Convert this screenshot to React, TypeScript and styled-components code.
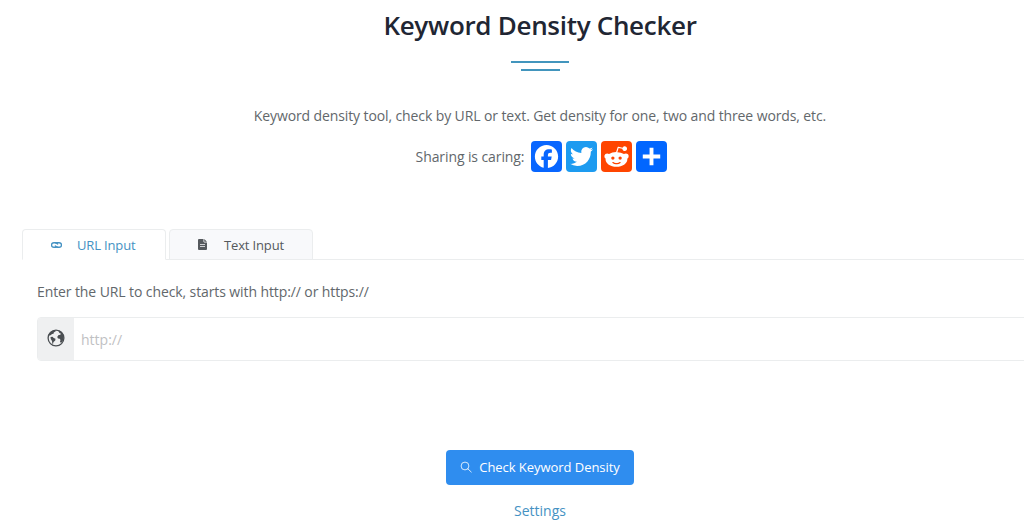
import React from 'react';
import styled, { createGlobalStyle } from 'styled-components';

const colors = {
    heading: '#212633',
    text: '#62676b',
    link: '#4592c3',
    border: '#ebedee',
    primary: '#2f8def',
};

const SHARE_LINKS = [
    {
        name: 'Facebook',
        color: '#0866ff',
        path:
            'M28 16c0-6.627-5.373-12-12-12S4 9.373 4 16c0 5.628 3.875 10.35 9.101 11.647v-7.98h-2.474V16H13.1v-1.58c0-4.085 1.849-5.978 5.859-5.978.76 0 2.072.15 2.608.298v3.325c-.283-.03-.775-.045-1.386-.045-1.967 0-2.728.745-2.728 2.683V16h3.92l-.673 3.667h-3.247v8.245C23.395 27.195 28 22.135 28 16',
    },
    {
        name: 'Twitter',
        color: '#1d9bf0',
        path:
            'M28 8.557a10 10 0 0 1-2.828.775 4.93 4.93 0 0 0 2.166-2.725 9.7 9.7 0 0 1-3.13 1.194 4.92 4.92 0 0 0-3.593-1.55 4.924 4.924 0 0 0-4.794 6.049c-4.09-.21-7.72-2.17-10.15-5.15a4.94 4.94 0 0 0-.665 2.477c0 1.71.87 3.214 2.19 4.1a5 5 0 0 1-2.23-.616v.06c0 2.39 1.7 4.38 3.952 4.83-.414.115-.85.174-1.297.174q-.476-.001-.928-.086a4.935 4.935 0 0 0 4.6 3.42 9.9 9.9 0 0 1-6.114 2.107q-.597 0-1.175-.068a13.95 13.95 0 0 0 7.55 2.213c9.056 0 14.01-7.507 14.01-14.013q0-.32-.015-.637c.96-.695 1.795-1.56 2.455-2.55z',
    },
    {
        name: 'Reddit',
        color: '#ff4500',
        path:
            'M28.543 15.774a2.953 2.953 0 0 0-2.951-2.949 2.882 2.882 0 0 0-1.9.713 14.075 14.075 0 0 0-6.85-2.044l1.38-4.349 3.768.884a2.452 2.452 0 1 0 .24-1.176l-4.274-1a.6.6 0 0 0-.709.4l-1.659 5.224a14.314 14.314 0 0 0-7.316 2.029 2.908 2.908 0 0 0-1.872-.681 2.942 2.942 0 0 0-1.618 5.4 5.109 5.109 0 0 0-.062.765c0 4.158 5.037 7.541 11.229 7.541s11.22-3.383 11.22-7.541a5.2 5.2 0 0 0-.053-.706 2.963 2.963 0 0 0 1.427-2.51zm-18.008 1.88a1.753 1.753 0 0 1 1.73-1.74 1.73 1.73 0 0 1 1.709 1.74 1.709 1.709 0 0 1-1.709 1.711 1.733 1.733 0 0 1-1.73-1.711zm9.565 4.968a5.573 5.573 0 0 1-4.081 1.272h-.032a5.576 5.576 0 0 1-4.087-1.272.6.6 0 0 1 .844-.854 4.5 4.5 0 0 0 3.238.927h.032a4.5 4.5 0 0 0 3.237-.927.6.6 0 1 1 .844.854zm-.331-3.256a1.726 1.726 0 1 1 1.709-1.712 1.717 1.717 0 0 1-1.712 1.712z',
    },
    { name: 'Share', color: '#0166ff', path: 'M14 7h4v18h-4zM7 14h18v4H7z' },
];

const LinkIcon = () => (
    <svg width="11" height="6" viewBox="0 0 22 12" fill="none" stroke="currentColor" strokeWidth="2.8">
        <path d="M12.500 8.500C12 10 11 10.500 9.500 10.500h-4a4.500 4.500 0 0 1 0-9h4c2 0 3.500 1.500 4 3.500" />
        <path d="M9.500 3.500C10 2 11 1.500 12.500 1.500h4a4.500 4.500 0 0 1 0 9h-4c-2 0-3.500-1.500-4-3.500" />
    </svg>
);

const FileIcon = () => (
    <svg width="9" height="11" viewBox="0 0 18 22">
        <path
            fill="currentColor"
            fillRule="evenodd"
            d="M2 0h9v5.500L12.500 7H18v13a2 2 0 0 1-2 2H2a2 2 0 0 1-2-2V2a2 2 0 0 1 2-2zM4 10v1.600h10V10zM4 14.500v1.600h10v-1.600zM12.500 0L18 5.500h-5.500z"
        />
    </svg>
);

const GlobeIcon = () => (
    <svg width="18" height="18" viewBox="0 0 36 36">
        <circle cx="18" cy="18" r="15.800" fill="none" stroke="currentColor" strokeWidth="2.600" />
        <path fill="currentColor" d="M3 12C5 7 10 3 16 2.500l1.500 2-4 2.500 0 2-4 1.500-2.500 2-4 1z" />
        <path fill="currentColor" d="M7 16l4-.500 2.500 2.500 3.500 1.500-.500 3.500-3.500 3-1 4-1.500-1-.500-5-2.500-4z" />
        <path
            fill="currentColor"
            d="M22 3l4 .500c4 2.500 7 7 7.500 12L33 21l-3 5.500-2.500 1-1.500-2 1-3.500-1.500-2.500-3.500-.500-1.500-3 2-3.500 4-1 1.500-2-3-1.500z"
        />
    </svg>
);

const SearchIcon = () => (
    <svg width="12" height="12" viewBox="0 0 24 24" fill="none" stroke="currentColor" strokeWidth="1.600">
        <circle cx="10" cy="10" r="7.800" />
        <path d="M15.500 15.500L22.500 22" strokeLinecap="round" />
    </svg>
);

export default function App() {
    return (
        <Viewport>
            <GlobalStyle />
            <Page>
                <Title>Keyword Density Checker</Title>
                <Divider>
                    <DividerLine $width={58} />
                    <DividerLine $width={39} />
                </Divider>
                <Description>
                    Keyword density tool, check by URL or text. Get density for one, two and three words, etc.
                </Description>
                <ShareRow>
                    <ShareLabel>Sharing is caring:</ShareLabel>
                    {SHARE_LINKS.map(({ name, color, path }) => (
                        <ShareButton key={name} $color={color} aria-label={name}>
                            <svg width="31" height="31" viewBox="0 0 32 32">
                                <path fill="#fff" d={path} />
                            </svg>
                        </ShareButton>
                    ))}
                </ShareRow>

                <Tabs>
                    <Tab $active>
                        <TabIcon>
                            <LinkIcon />
                        </TabIcon>
                        URL Input
                    </Tab>
                    <Tab>
                        <TabIcon>
                            <FileIcon />
                        </TabIcon>
                        Text Input
                    </Tab>
                </Tabs>

                <Panel>
                    <Label htmlFor="url">Enter the URL to check, starts with http:// or https://</Label>
                    <InputGroup>
                        <InputPrefix>
                            <GlobeIcon />
                        </InputPrefix>
                        <UrlInput id="url" placeholder="http://" />
                    </InputGroup>
                </Panel>

                <Actions>
                    <SubmitButton>
                        <SearchIcon />
                        Check Keyword Density
                    </SubmitButton>
                    <SettingsLink>Settings</SettingsLink>
                </Actions>
            </Page>
        </Viewport>
    );
}

const GlobalStyle = createGlobalStyle`
    * {
        box-sizing: border-box;
    }

    body {
        margin: 0;
        background: #fff;
        color: ${colors.text};
        font-family: 'Open Sans', 'Noto Sans', sans-serif;
        font-size: 14px;
    }

    svg {
        display: block;
        flex-shrink: 0;
    }
`;

const Viewport = styled.div`
    height: 531px;
    overflow: hidden;
`;

// the page is a little wider than the window and runs off its right edge
const Page = styled.main`
    display: flex;
    flex-direction: column;
    width: 1080px;
    padding: 6px 22px 0;
`;

const Title = styled.h1`
    margin: 0;
    color: ${colors.heading};
    font-size: 26px;
    font-weight: 600;
    line-height: 38px;
    letter-spacing: -0.3px;
    text-align: center;
    white-space: nowrap;
`;

const Divider = styled.div`
    display: flex;
    flex-direction: column;
    align-items: center;
    gap: 6px;
    margin-top: 17px;
`;

const DividerLine = styled.span<{ $width: number }>`
    width: ${(props) => props.$width}px;
    height: 2px;
    background: #4295bd;
`;

const Description = styled.p`
    margin: 35px 0 0;
    line-height: 20px;
    letter-spacing: -0.11px;
    text-align: center;
    white-space: nowrap;
`;

const ShareRow = styled.div`
    display: flex;
    justify-content: center;
    align-items: center;
    gap: 4px;
    margin-top: 15px;
    padding-left: 3px;
`;

const ShareLabel = styled.span`
    margin-right: 3px;
    letter-spacing: -0.1px;
    white-space: nowrap;
`;

const ShareButton = styled.a<{ $color: string }>`
    width: 31px;
    height: 31px;
    border-radius: 4px;
    background: ${(props) => props.$color};
    cursor: pointer;
`;

const Tabs = styled.div`
    display: flex;
    gap: 3px;
    height: 31px;
    margin-top: 57px;
    border-bottom: 1px solid ${colors.border};
`;

const Tab = styled.button<{ $active?: boolean }>`
    display: flex;
    align-items: center;
    width: 144px;
    height: 31px;
    padding: 0 0 0 28px;
    border: 1px solid ${colors.border};
    border-bottom-color: ${(props) => (props.$active ? '#fff' : colors.border)};
    border-radius: 4px 4px 0 0;
    background: ${(props) => (props.$active ? '#fff' : '#f8f9fb')};
    color: ${(props) => (props.$active ? colors.link : '#55595d')};
    font-family: inherit;
    font-size: 13px;
    letter-spacing: -0.15px;
    white-space: nowrap;
    cursor: pointer;
`;

const TabIcon = styled.span`
    display: flex;
    width: 26px;
`;

const Panel = styled.section`
    display: flex;
    flex-direction: column;
    padding: 22px 15px 0;
`;

const Label = styled.label`
    line-height: 20px;
    letter-spacing: -0.1px;
    white-space: nowrap;
`;

const InputGroup = styled.div`
    display: flex;
    height: 44px;
    margin-top: 15px;
    border: 1px solid ${colors.border};
    border-radius: 4px;
    overflow: hidden;
`;

const InputPrefix = styled.span`
    display: flex;
    justify-content: center;
    align-items: center;
    width: 36px;
    padding: 0 1px 2px 0;
    background: #eff0f1;
    color: #4a4e52;
`;

const UrlInput = styled.input`
    flex: 1;
    padding: 0 7px;
    border: none;
    outline: none;
    font-family: inherit;
    font-size: 14px;

    &::placeholder {
        color: #bfc1c3;
    }
`;

const Actions = styled.div`
    display: flex;
    flex-direction: column;
    align-items: center;
    margin-top: 89px;
`;

const SubmitButton = styled.button`
    display: flex;
    justify-content: center;
    align-items: center;
    gap: 7px;
    width: 188px;
    height: 35px;
    padding: 0 0 1px;
    border: none;
    border-radius: 4px;
    background: ${colors.primary};
    color: #fff;
    font-family: inherit;
    font-size: 13px;
    letter-spacing: -0.05px;
    white-space: nowrap;
    cursor: pointer;
`;

const SettingsLink = styled.a`
    margin-top: 16px;
    color: ${colors.link};
    line-height: 20px;
    cursor: pointer;
`;
